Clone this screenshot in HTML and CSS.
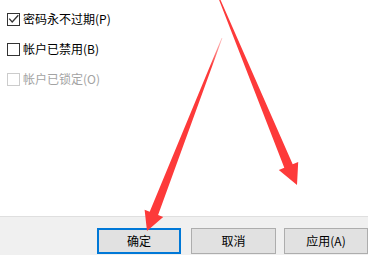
FILE: index.html
```html
<!DOCTYPE html>
<html lang="zh-CN">
<head>
<meta charset="utf-8">
<link rel="stylesheet" href="styles.css">
</head>
<body>
<div class="page">
  <div class="content">
    <div class="row">
      <span class="box checked">
        <svg width="13" height="13" viewBox="0 0 13 13"><path d="M2.2 5.6 L5.2 9 L11.3 2.2" fill="none" stroke="#333" stroke-width="1.3"/></svg>
      </span>
      <span class="label">密码永不过期(P)</span>
    </div>
    <div class="row">
      <span class="box"></span>
      <span class="label">帐户已禁用(B)</span>
    </div>
    <div class="row disabled">
      <span class="box"></span>
      <span class="label">帐户已锁定(O)</span>
    </div>
  </div>
  <div class="footer">
    <button class="btn default">确定</button>
    <button class="btn second">取消</button>
    <button class="btn third">应用(A)</button>
  </div>
  <svg class="arrows" width="368" height="256" viewBox="0 0 368 256">
    <defs>
      <linearGradient id="fade1" x1="222" y1="38" x2="150" y2="225" gradientUnits="userSpaceOnUse">
        <stop offset="0" stop-color="#fd3a3a" stop-opacity="0.3"/>
        <stop offset="0.15" stop-color="#fd3a3a" stop-opacity="1"/>
        <stop offset="1" stop-color="#fd3a3a" stop-opacity="1"/>
      </linearGradient>
    </defs>
    <polygon fill="url(#fade1)" points="222.4,38.1 158.1,214.9 163.2,216.9 147,231 144.6,209.7 149.7,211.7 221.6,37.9"/>
    <polygon fill="#fd3a3a" points="219.6,-2.2 292.7,164.3 298.2,162.0 297,185 278.8,170.0 284.3,167.7 218.4,-1.8"/>
  </svg>
</div>
</body>
</html>
```

FILE: styles.css
```css
html, body {
  margin: 0;
  padding: 0;
  background: #ffffff;
}

.page {
  position: relative;
  width: 368px;
  height: 256px;
  overflow: hidden;
  font-family: "Noto Sans CJK SC", "Microsoft YaHei", sans-serif;
  font-size: 12px;
  color: #000;
}

.content {
  height: 217px;
  padding-top: 4px;
  box-sizing: border-box;
  background: #ffffff;
  border-bottom: 1px solid #dfdfdf;
}

.row {
  display: flex;
  align-items: center;
  height: 30px;
  padding-left: 7px;
}

.box {
  width: 13px;
  height: 13px;
  box-sizing: border-box;
  border: 1px solid #333333;
  background: #fff;
  position: relative;
  flex: none;
}

.box svg {
  position: absolute;
  left: -1px;
  top: -1px;
}

.label {
  margin-left: 3px;
  line-height: 14px;
}

.disabled .box {
  border-color: #cccccc;
}

.disabled .label {
  color: #a3a3a3;
}

.footer {
  height: 38px;
  background: #f0f0f0;
  display: flex;
  align-items: flex-start;
  padding-top: 11px;
  padding-left: 97px;
  box-sizing: border-box;
}

.btn {
  height: 26px;
  width: 84px;
  margin: 0;
  padding: 0;
  box-sizing: border-box;
  background: #e1e1e1;
  border: 1px solid #adadad;
  font-family: "Noto Sans CJK SC", "Microsoft YaHei", sans-serif;
  font-size: 12px;
  color: #000;
  line-height: 14px;
  flex: none;
}

.btn.default {
  border: 2px solid #0078d7;
}

.btn.second {
  margin-left: 10px;
  width: 85px;
}

.btn.third {
  margin-left: 8px;
}

.arrows {
  position: absolute;
  left: 0;
  top: 0;
  pointer-events: none;
}
```
